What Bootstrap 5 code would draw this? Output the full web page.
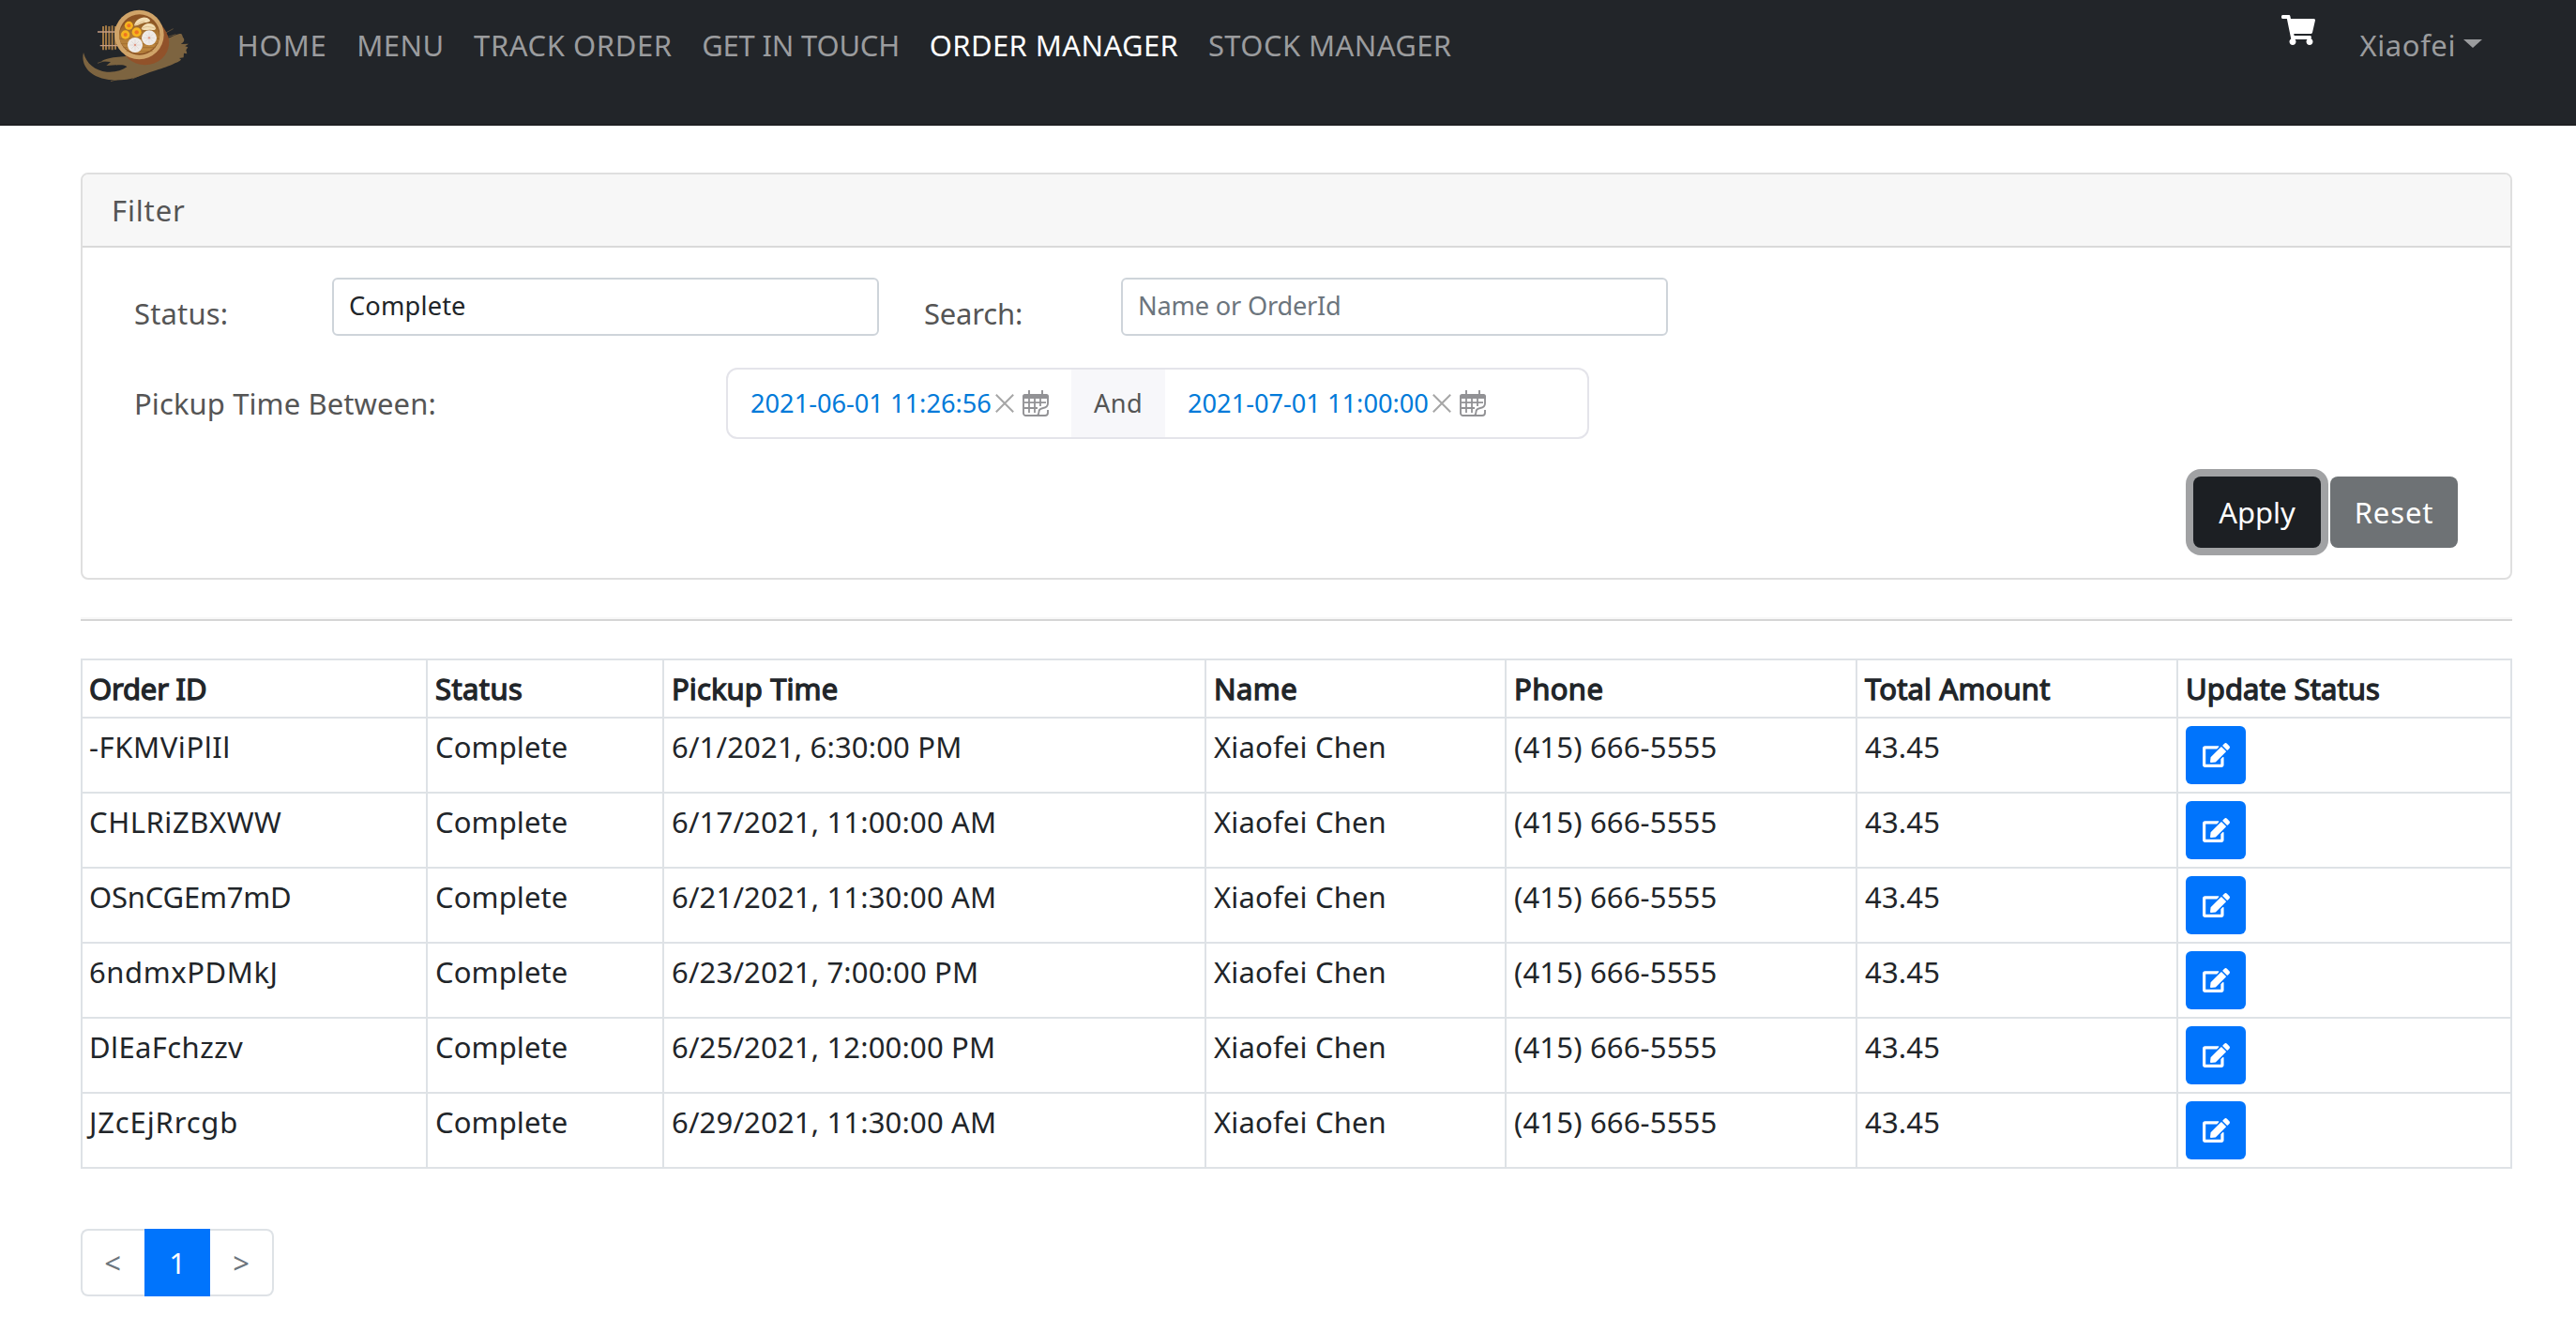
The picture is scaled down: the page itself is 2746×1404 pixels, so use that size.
<!DOCTYPE html>
<html lang="en">
<head>
<meta charset="utf-8">
<meta name="viewport" content="width=device-width, initial-scale=1">
<title>Order Manager</title>
<link href="https://cdn.jsdelivr.net/npm/bootstrap@5.3.0/dist/css/bootstrap.min.css" rel="stylesheet">
<style>
  body { font: 31px/44px "Noto Sans", sans-serif; color: #212529; background: #fff; }

  /* letter-spacing steps */
  .ls-m2 { letter-spacing: -.2px; }
  .ls-0 { letter-spacing: 0; }
  .ls-1 { letter-spacing: .1px; }
  .ls-2 { letter-spacing: .17px; }
  .ls-4 { letter-spacing: .4px; }
  .ls-6 { letter-spacing: .57px; }
  .ls-8 { letter-spacing: .84px; }

  .topbar { height: 134px; background: #222529; border-bottom: 2px solid #1f2023; padding: 0 84px; align-items: flex-start; }
  .brand-logo { margin-top: 4px; width: 120px; height: 90px; }
  .topbar .navbar-nav { margin: 26px 0 0 33px; }
  .topbar .navbar-nav .nav-link { color: #9b9c9e; padding: 0 15.8px; line-height: 44px; white-space: nowrap; }
  .topbar .navbar-nav .nav-link.active { color: #fff; }
  .cart-link { margin: 16px 48px 0 auto; height: 32px; line-height: 0; }
  .user-link { margin-top: 26px; margin-right: 16px; color: #9b9c9e; text-decoration: none; }
  .user-link::after { border-top: 9px solid; border-left: 10px solid transparent; border-right: 10px solid transparent; margin-left: 8px; vertical-align: 9px; }

  .page { padding: 50px 68px 0 86px; }
  .filter-card { border: 2px solid #dfdfdf; border-radius: 8px; height: 434px; color: #555; }
  .filter-card .card-header { height: 78px; padding: 16px 31px; background: #f7f7f7; border-bottom: 2px solid #d9d9d9; border-radius: 6px 6px 0 0; }
  .filter-card .card-body { padding: 32px 56px 0 55px; }
  .lbl-status { width: 211px; padding-top: 16px; }
  .lbl-search { width: 210px; margin-left: 48px; padding-top: 16px; }
  .lbl-pickup { width: 631px; }
  .pickup-row { margin-top: 34px; }
  .btn-row { margin-top: 40px; gap: 10px; }
  .field { width: 583px; height: 62px; padding: 0 16px 3px; border: 2px solid #ced4da; border-radius: 6px; font-size: 27.2px; line-height: 40px; color: #212529; }
  .field::placeholder { color: #6c757d; opacity: 1; }

  .range { width: 920px; height: 76px; border: 2px solid #e4e4ea; border-radius: 12px; font-size: 27.2px; line-height: 40px; color: #555; overflow: hidden; }
  .range-part { padding-left: 24px; color: #007ad9; white-space: nowrap; }
  .range-part svg { flex: none; }
  .part-from { width: 366px; }
  .range-mid { width: 100px; background: #f7f7fa; }
  .date-txt { width: 261px; }
  .ico-x { margin-right: 9px; }

  .btn-big { width: 136px; height: 76px; border: 0; border-radius: 8px; font-size: 31px; line-height: 44px; padding: 0; color: #fff; }
  .btn-apply, .btn-apply:hover { background: #1c1f23; color: #fff; box-shadow: 0 0 0 8px #a1a2a4; }
  .btn-reset, .btn-reset:hover { background: #6e7275; color: #fff; }

  .split { height: 2px; background: #d5d5d5; border: 0; opacity: 1; margin: 42px 0 40px; box-shadow: 0 -2px 0 #f8f8f8; }

  .orders { table-layout: fixed; width: 2592px; border-collapse: collapse; margin: 0; color: #212529; line-height: 44px; }
  .orders > :not(caption) > * > * { border: 2px solid #dee2e6; padding: 8px 8px 6px; vertical-align: top; box-shadow: none; }
  .orders > :not(caption) > tr > :first-child { padding-left: 7px; }
  .orders tr { border: 0; }
  .orders > thead > tr > th { height: 62px; padding-top: 8px; font-weight: 400; -webkit-text-stroke: 1.3px #212529; line-height: 44px; }
  .orders tbody td { height: 80px; }
  .btn-edit, .btn-edit:hover { display: flex; align-items: center; justify-content: center; width: 64px; height: 62px; padding: 0; border: 0; border-radius: 6px; background: #0074fc; color: #fff; }

  .pages { margin-top: 64px; }
  .pages .page-link { height: 72px; border: 2px solid #dee2e6; color: #6c757d; padding: 12px 0; font-size: 31px; line-height: 44px; text-align: center; }
  .pages .page-item:first-child .page-link { width: 68px; padding-right: 2px; border-right: 0; border-radius: 8px 0 0 8px; }
  .pages .page-item.active .page-link { width: 70px; background: #0074fc; border-color: #0074fc; color: #fff; margin: 0; }
  .pages .page-item:last-child .page-link { width: 68px; border-left: 0; border-radius: 0 8px 8px 0; margin: 0; }
</style>
</head>
<body>
<svg width="0" height="0" class="position-absolute" aria-hidden="true">
  <symbol id="edit" viewBox="0 0 576 512"><path fill="currentColor" d="M402.6 83.2l90.2 90.2c3.8 3.8 3.8 10 0 13.8L274.4 405.6l-92.8 10.3c-12.4 1.4-22.9-9.1-21.5-21.5l10.3-92.8L388.8 83.2c3.8-3.8 10-3.8 13.8 0zm162-22.9l-48.8-48.8c-15.2-15.2-39.9-15.2-55.2 0l-35.4 35.4c-3.8 3.8-3.8 10 0 13.8l90.2 90.2c3.8 3.8 10 3.8 13.8 0l35.4-35.4c15.2-15.3 15.2-40 0-55.2zM384 346.2V448H64V128h229.8c3.2 0 6.2-1.3 8.5-3.5l40-40c7.6-7.6 2.2-20.5-8.5-20.5H48C21.5 64 0 85.5 0 112v352c0 26.5 21.5 48 48 48h352c26.5 0 48-21.5 48-48V306.2c0-10.7-12.9-16-20.5-8.5l-40 40c-2.2 2.3-3.5 5.3-3.5 8.5z"/></symbol>
  <symbol id="close" viewBox="0 0 20 20"><path d="M.8.8 19.2 19.2M19.2.8.8 19.2" fill="none" stroke="#a6a6a6" stroke-width="2"/></symbol>
  <symbol id="calendar" viewBox="0 0 28 28">
    <g fill="none" stroke="#929295" stroke-width="1.9">
      <path d="M7 0v5M21 0v5"/>
      <path d="M1 9v15.5A2.5 2.5 0 0 0 3.500 27h20.500a3 3 0 0 0 3-3v-3M27 9v5c0 3.500-1.500 4.500-5 5-3 .5-4.500 1.500-4.500 4 0 2-.5 3.200-2 4"/>
      <path d="M2 13.200h23M2 19h14M7 9v15M13 9v15M19 9v8" stroke-width="1.800"/>
    </g>
    <path d="M0 9V6.500A2.500 2.500 0 0 1 2.500 4h23A2.500 2.500 0 0 1 28 6.500V9z" fill="#929295"/>
  </symbol>
</svg>

<nav class="navbar navbar-expand topbar">
  <a href="#" class="lh-1 d-block" aria-label="Home">
    <svg class="brand-logo d-block" viewBox="0 0 360 270">
      <defs>
        <linearGradient id="wood" x1="0" y1="0" x2="0" y2="1"><stop offset="0" stop-color="#8d5a26"/><stop offset=".5" stop-color="#b07a35"/><stop offset="1" stop-color="#c08a42"/></linearGradient>
      </defs>
      <path fill="#7d6440" d="M15 156c-6 24 3 48 22 64 28 23 70 28 116 22 34-4 58-18 84-26 26-9 44-14 62-22 12-6 24-8 28-16l-6-4 14-2 1-14 10 2-3-12 6-9-9-3 11-8-25 1c10-4 14-14 8-20-4-8-2-14-12-13-14 2-24 12-38 14L150 168l-40 4c-14 4-26 4-38 12l30 2-14 12 30-2c14 2 30-2 36 6-16 12-38 18-64 16-38-4-66-26-75-62z"/>
      <path stroke="#7d6440" stroke-width="2" d="M276 94l26-14M284 106l26-8M130 240l-28 8M196 228l-26 13M84 182l-24 8" fill="none"/>
      <path d="M78 72v76M87 70v78M97 72v74M107 70v78M117 72v74" stroke="#a37a45" stroke-width="6"/>
      <path d="M60 90h62M68 134h58" stroke="#c49c83" stroke-width="4"/>
      <ellipse cx="212" cy="126" rx="76" ry="70" fill="#91522a"/>
      <path d="M246 50c30 24 46 56 42 84l-40 26z" fill="#91522a"/>
      <circle cx="193" cy="99" r="79" fill="#d0a469"/>
      <circle cx="194" cy="99" r="65" fill="#8c5425"/>
      <path d="M129 106a65 60 0 0 0 129 0c0-36-26-57-64-57s-65 23-65 57z" fill="url(#wood)"/>
      <path d="M134 128h120M142 140h104M132 112h124M152 152h84" stroke="#9c672b" stroke-width="2"/>
      <g fill="#f6b51f"><circle cx="160" cy="70" r="13.500"/><circle cx="149" cy="99" r="14"/><circle cx="185" cy="91" r="15"/></g>
      <g fill="#ef7421"><circle cx="160" cy="70" r="6"/><circle cx="149" cy="99" r="6"/><circle cx="185" cy="91" r="6.500"/></g>
      <path fill="#f2deb5" d="M177 70c4-22 34-36 50-19 3 8-5 8-14 9-14 1-24 12-36 10zM200 80c8-22 40-22 46-2 0 8-8 6-16 5-12-1-22 5-30-3z"/>
      <path fill="none" stroke="#d1ae78" stroke-width="2" d="M179 68c10 0 18-12 32-12M202 79c12-8 26-6 40-1"/>
      <circle cx="225" cy="109" r="24" fill="#efebe8"/><circle cx="180" cy="132" r="24" fill="#efebe8"/>
      <path stroke="#d4cbc8" stroke-width="1.500" d="M225 91v36M207 109h36M213 97l24 24M237 97l-24 24M180 114v36M162 132h36M168 120l24 24M192 120l-24 24"/>
      <circle cx="225" cy="109" r="3.500" fill="#e2957f"/><circle cx="180" cy="132" r="3.500" fill="#e2957f"/>
    </svg>
  </a>
  <ul class="navbar-nav">
    <li class="nav-item"><a class="nav-link ls-8" href="#">HOME</a></li>
    <li class="nav-item"><a class="nav-link ls-4" href="#">MENU</a></li>
    <li class="nav-item"><a class="nav-link ls-6" href="#">TRACK ORDER</a></li>
    <li class="nav-item"><a class="nav-link ls-m2" href="#">GET IN TOUCH</a></li>
    <li class="nav-item"><a class="nav-link active ls-4" href="#">ORDER MANAGER</a></li>
    <li class="nav-item"><a class="nav-link ls-4" href="#">STOCK MANAGER</a></li>
  </ul>
  <a href="#" class="cart-link text-white" aria-label="Cart">
    <svg width="36" height="32" viewBox="0 0 576 512"><path fill="currentColor" d="M528.12 301.319l47.273-208C578.806 78.301 567.391 64 551.99 64H159.208l-9.166-44.81C147.758 8.021 137.93 0 126.529 0H24C10.745 0 0 10.745 0 24v16c0 13.255 10.745 24 24 24h69.883l70.248 343.435C147.325 417.1 136 435.222 136 456c0 30.928 25.072 56 56 56s56-25.072 56-56c0-15.674-6.447-29.835-16.824-40h209.647C430.447 426.165 424 440.326 424 456c0 30.928 25.072 56 56 56s56-25.072 56-56c0-22.172-12.888-41.332-31.579-50.405l5.517-24.276c3.413-15.018-8.002-29.319-23.403-29.319H218.117l-6.545-32h293.145c11.206 0 20.92-7.754 23.403-18.681z"/></svg>
  </a>
  <a href="#" class="user-link dropdown-toggle ls-6">Xiaofei</a>
</nav>

<main class="page">
  <section class="card filter-card">
    <div class="card-header ls-8">Filter</div>
    <div class="card-body">
      <div class="d-flex align-items-start">
        <label class="lbl-status ls-2" for="status">Status:</label>
        <input id="status" class="form-control field ls-2" type="text" value="Complete">
        <label class="lbl-search ls-m2" for="search">Search:</label>
        <input id="search" class="form-control field ls-m2" type="text" placeholder="Name or OrderId">
      </div>
      <div class="d-flex align-items-center pickup-row">
        <span class="lbl-pickup ls-1">Pickup Time Between:</span>
        <div class="range d-flex">
          <div class="range-part part-from d-flex align-items-center">
            <span class="date-txt ls-0">2021-06-01 11:26:56</span>
            <svg class="ico-x" width="20" height="20"><use href="#close"/></svg>
            <svg width="28" height="28"><use href="#calendar"/></svg>
          </div>
          <div class="range-mid d-flex align-items-center justify-content-center ls-4">And</div>
          <div class="range-part d-flex align-items-center">
            <span class="date-txt ls-0">2021-07-01 11:00:00</span>
            <svg class="ico-x" width="20" height="20"><use href="#close"/></svg>
            <svg width="28" height="28"><use href="#calendar"/></svg>
          </div>
        </div>
      </div>
      <div class="d-flex justify-content-end btn-row">
        <button class="btn btn-big btn-apply ls-0" type="button">Apply</button>
        <button class="btn btn-big btn-reset ls-8" type="button">Reset</button>
      </div>
    </div>
  </section>

  <hr class="split">

  <table class="table table-bordered table-sm orders">
    <colgroup><col width="368"><col width="252"><col width="578"><col width="320"><col width="374"><col width="342"><col width="356"></colgroup>
    <thead>
      <tr><th class="ls-m2">Order ID</th><th class="ls-4">Status</th><th class="ls-1">Pickup Time</th><th class="ls-4">Name</th><th class="ls-4">Phone</th><th class="ls-2">Total Amount</th><th class="ls-1">Update Status</th></tr>
    </thead>
    <tbody>
      <tr><td class="ls-6">-FKMViPlIl</td><td class="ls-1">Complete</td><td class="ls-2">6/1/2021, 6:30:00 PM</td><td class="ls-2">Xiaofei Chen</td><td class="ls-2">(415) 666-5555</td><td class="ls-2">43.45</td><td><button class="btn btn-edit" aria-label="Edit"><svg width="29" height="26"><use href="#edit"/></svg></button></td></tr>
      <tr><td class="ls-6">CHLRiZBXWW</td><td class="ls-1">Complete</td><td class="ls-2">6/17/2021, 11:00:00 AM</td><td class="ls-2">Xiaofei Chen</td><td class="ls-2">(415) 666-5555</td><td class="ls-2">43.45</td><td><button class="btn btn-edit" aria-label="Edit"><svg width="29" height="26"><use href="#edit"/></svg></button></td></tr>
      <tr><td class="ls-m2">OSnCGEm7mD</td><td class="ls-1">Complete</td><td class="ls-2">6/21/2021, 11:30:00 AM</td><td class="ls-2">Xiaofei Chen</td><td class="ls-2">(415) 666-5555</td><td class="ls-2">43.45</td><td><button class="btn btn-edit" aria-label="Edit"><svg width="29" height="26"><use href="#edit"/></svg></button></td></tr>
      <tr><td class="ls-6">6ndmxPDMkJ</td><td class="ls-1">Complete</td><td class="ls-2">6/23/2021, 7:00:00 PM</td><td class="ls-2">Xiaofei Chen</td><td class="ls-2">(415) 666-5555</td><td class="ls-2">43.45</td><td><button class="btn btn-edit" aria-label="Edit"><svg width="29" height="26"><use href="#edit"/></svg></button></td></tr>
      <tr><td class="ls-4">DlEaFchzzv</td><td class="ls-1">Complete</td><td class="ls-2">6/25/2021, 12:00:00 PM</td><td class="ls-2">Xiaofei Chen</td><td class="ls-2">(415) 666-5555</td><td class="ls-2">43.45</td><td><button class="btn btn-edit" aria-label="Edit"><svg width="29" height="26"><use href="#edit"/></svg></button></td></tr>
      <tr><td class="ls-8">JZcEjRrcgb</td><td class="ls-1">Complete</td><td class="ls-2">6/29/2021, 11:30:00 AM</td><td class="ls-2">Xiaofei Chen</td><td class="ls-2">(415) 666-5555</td><td class="ls-2">43.45</td><td><button class="btn btn-edit" aria-label="Edit"><svg width="29" height="26"><use href="#edit"/></svg></button></td></tr>
    </tbody>
  </table>

  <ul class="pagination pages mb-0">
    <li class="page-item"><a class="page-link" href="#">&lt;</a></li>
    <li class="page-item active"><a class="page-link" href="#">1</a></li>
    <li class="page-item"><a class="page-link" href="#">&gt;</a></li>
  </ul>
</main>
<script src="https://cdn.jsdelivr.net/npm/bootstrap@5.3.0/dist/js/bootstrap.bundle.min.js"></script>
</body>
</html>
